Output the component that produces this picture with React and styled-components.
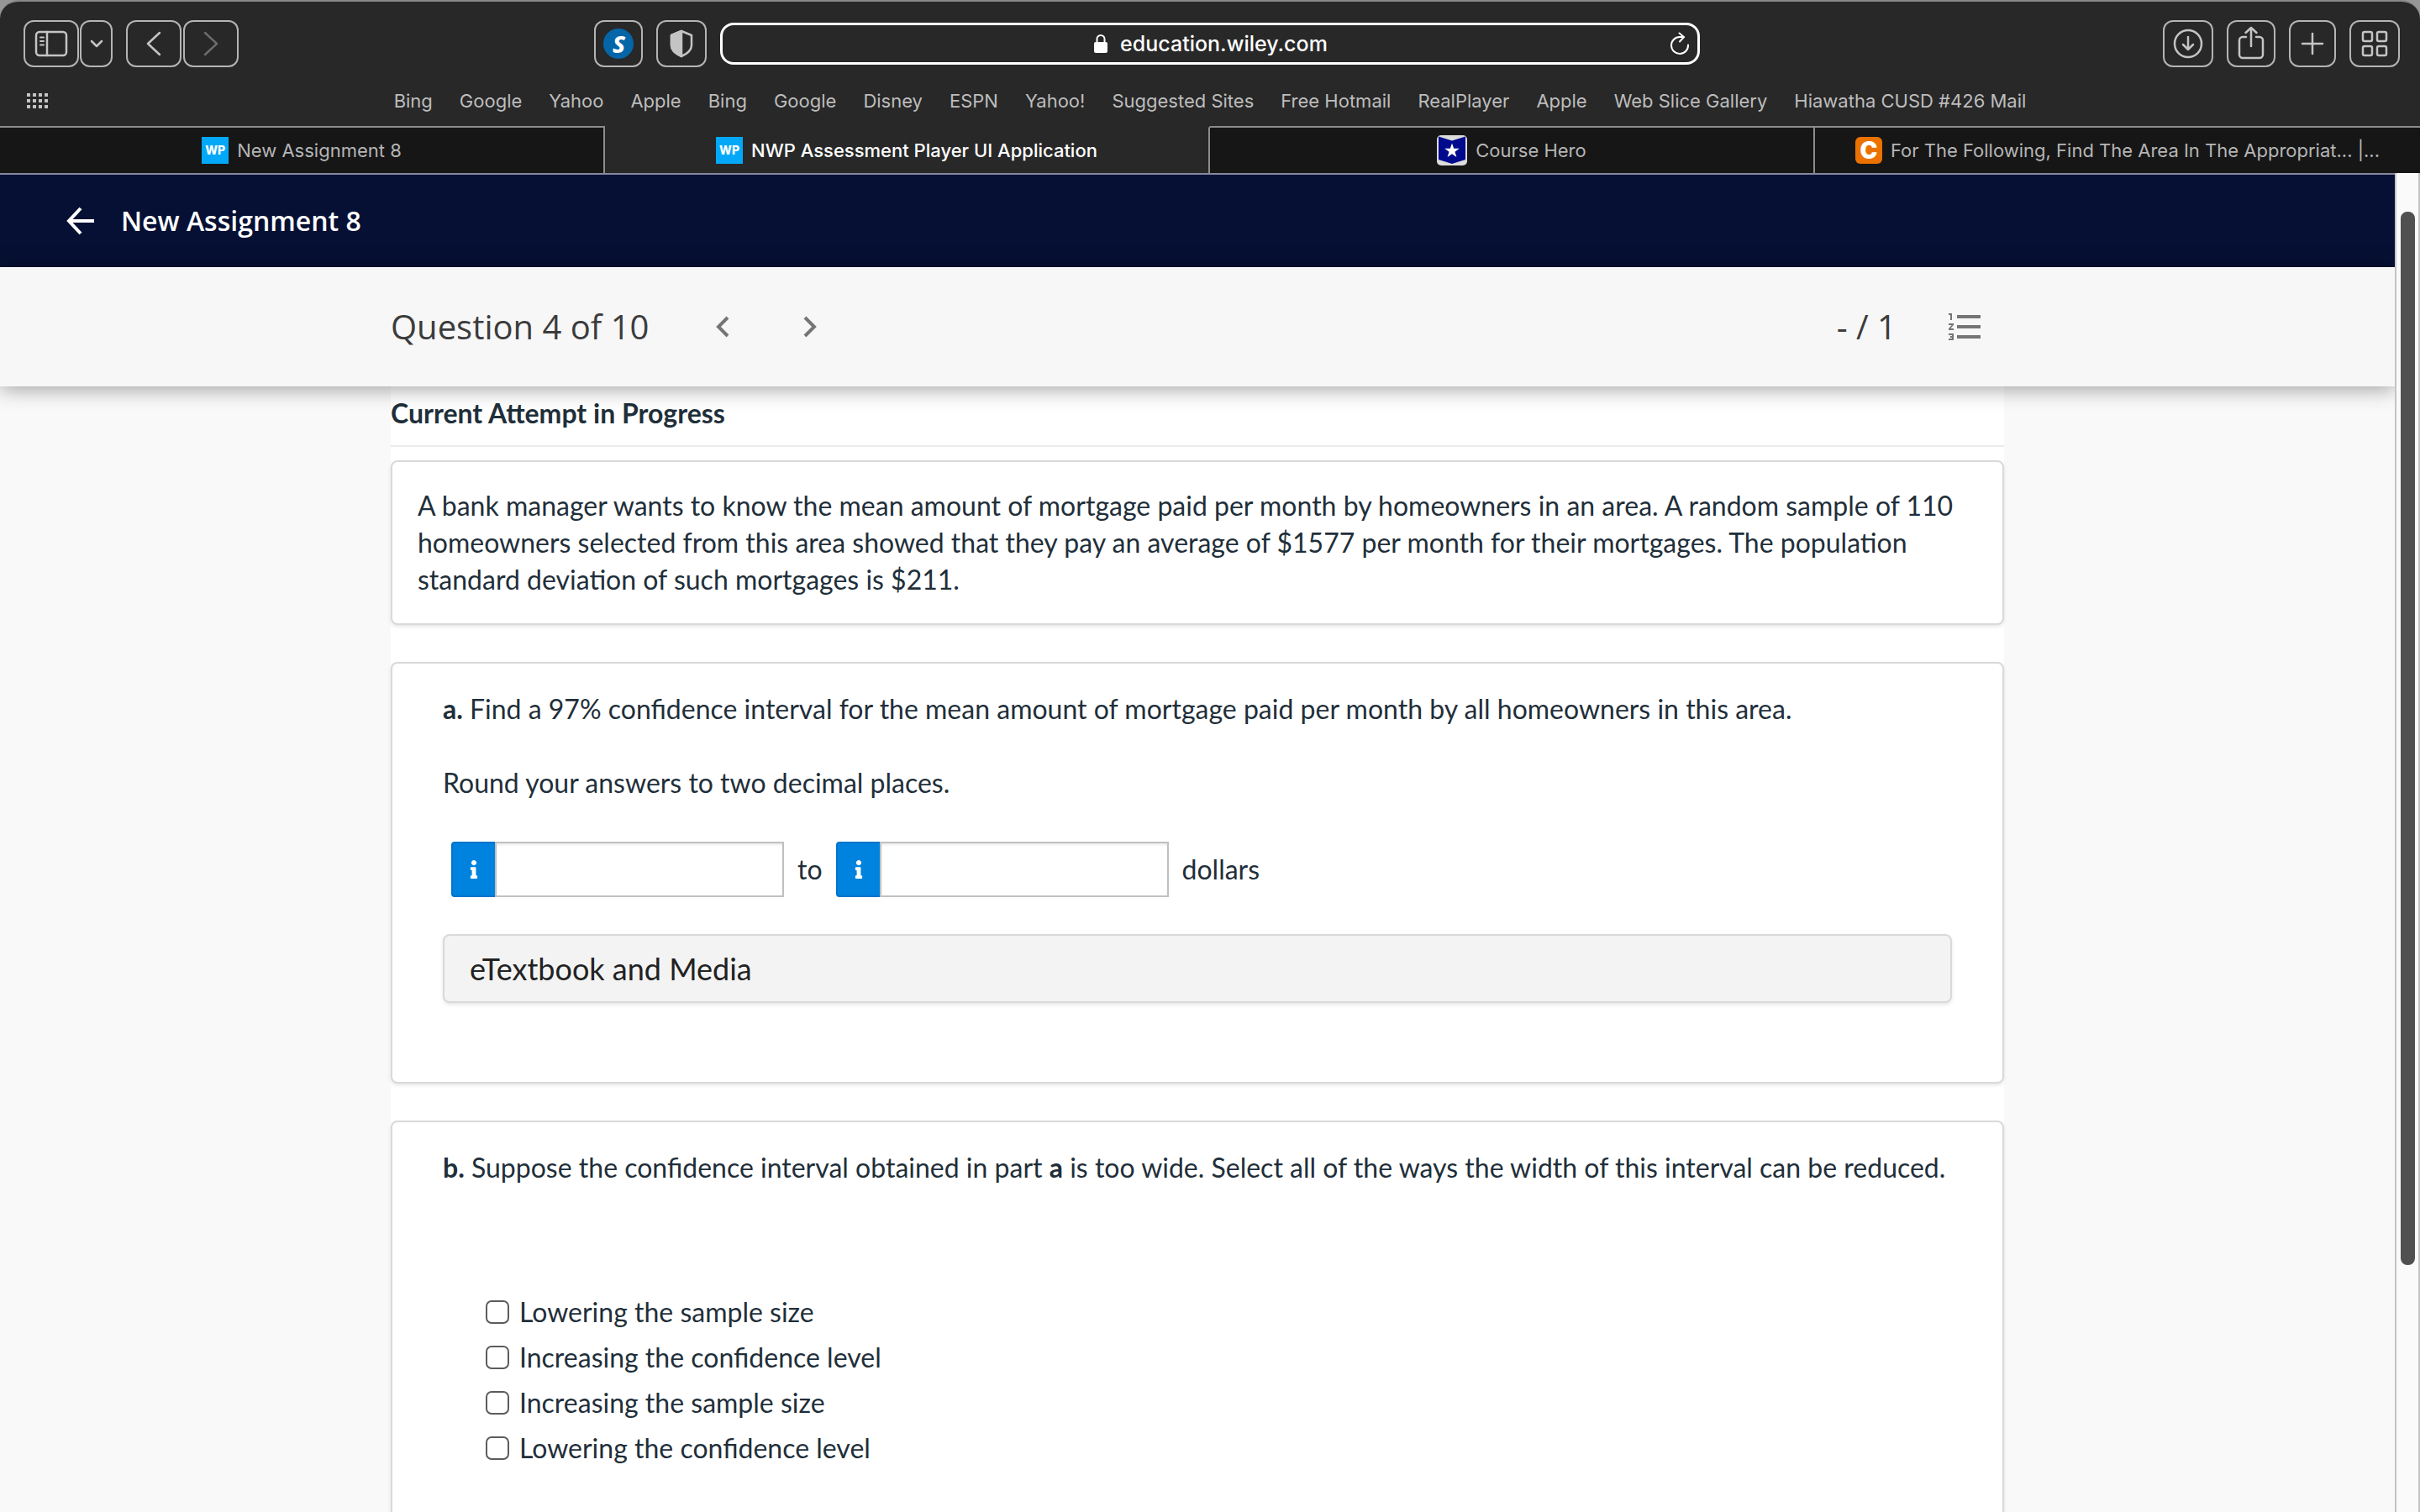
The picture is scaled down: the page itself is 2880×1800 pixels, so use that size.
import { useState } from 'react'
import styled, { createGlobalStyle } from 'styled-components'
import { MdFormatListNumbered } from 'react-icons/md'
import { FaInfo } from 'react-icons/fa'

const GlobalStyle = createGlobalStyle`
  * {
    box-sizing: border-box;
  }

  body {
    margin: 0;
    background: #969696;
    font-family: "Lato", sans-serif;
    font-size: 32px;
    line-height: 44px;
    color: #1f2f3a;
  }

  button, input {
    font: inherit;
    color: inherit;
  }

  button {
    padding: 0;
    background: none;
    border: 0;
    cursor: pointer;
  }

  p {
    margin: 0;
  }
`

const Window = styled.div`
  height: 100vh;
  display: flex;
  flex-direction: column;
  overflow: hidden;
  border-top: 2px solid #888888;
  border-radius: 22px 22px 0 0;
  background: #282828;
`

/* browser chrome */

const Chrome = styled.header`
  flex: none;
  font-family: "Inter", sans-serif;
  font-size: 22px;
  line-height: 28px;
  color: #bdbdbd;
`

const Toolbar = styled.div`
  height: 100px;
  display: flex;
  align-items: center;
  padding: 0 24px 0 28px;
`

const Spacer = styled.div`
  flex: ${props => props.$grow} 1 0;
`

const Group = styled.div`
  display: flex;
  gap: ${props => props.$gap};
`

const ToolButton = styled.button`
  width: ${props => props.$width || '60px'};
  height: 56px;
  display: flex;
  align-items: center;
  justify-content: center;
  border: 2px solid #b4b4b4;
  border-radius: 12px;
  color: ${props => (props.$dim ? '#6c6c6c' : '#c4c4c4')};

  svg {
    display: block;
    fill: none;
    stroke: currentColor;
    stroke-width: 2.5;
    stroke-linecap: round;
    stroke-linejoin: round;
  }
`

const ExtensionBadge = styled.span`
  width: 36px;
  height: 36px;
  display: flex;
  align-items: center;
  justify-content: center;
  border-radius: 50%;
  background: #0466a8;
  color: #fff;
  font-family: "Noto Sans", sans-serif;
  font-size: 28px;
  font-style: italic;
  font-weight: 800;
`

const Address = styled.form`
  width: 1166px;
  height: 50px;
  display: grid;
  grid-template-columns: 1fr auto 1fr;
  align-items: center;
  margin: 0 0 0 16px;
  padding: 0 8px;
  border: 3px solid #fff;
  border-radius: 16px;
  color: #fff;
`

const Location = styled.label`
  grid-column: 2;
  display: flex;
  align-items: center;
  gap: 14px;
`

const LocationInput = styled.input`
  field-sizing: content;
  padding: 0;
  border: 0;
  background: none;
  font-size: 25px;
  font-weight: 500;
  outline: 0;
`

const Reload = styled.button`
  justify-self: end;
  display: flex;
`

const Favorites = styled.nav`
  height: 48px;
  display: grid;
  grid-template-columns: 1fr auto 1fr;
  align-items: center;
  padding: 0 32px 12px;
`

const FavoriteLinks = styled.div`
  display: flex;
  gap: 32px;
`

const Favorite = styled.a`
  color: inherit;
  text-decoration: none;
  white-space: nowrap;
`

const Tabs = styled.div`
  height: 56px;
  display: grid;
  grid-template-columns: repeat(4, 1fr);
`

const Tab = styled.button`
  min-width: 0;
  display: flex;
  align-items: center;
  justify-content: center;
  gap: 10px;
  padding: 0 40px;
  border-top: 2px solid ${props => (props.$active ? '#282828' : '#8c8c8c')};
  border-right: 2px solid #8c8c8c;
  background: ${props => (props.$active ? '#282828' : '#161616')};
  color: ${props => (props.$active ? '#fff' : '#b5b5b5')};
  font-weight: ${props => (props.$active ? 500 : 400)};

  &:last-child {
    border-right: 0;
  }

  svg {
    flex: none;
  }
`

const TabTitle = styled.span`
  white-space: nowrap;
`

const WpBadge = styled.span`
  width: 32px;
  height: 32px;
  display: flex;
  align-items: center;
  justify-content: center;
  background: #03a9f8;
  color: #fff;
  font-size: 14px;
  font-weight: 800;
`

const CheggBadge = styled.span`
  width: 32px;
  height: 32px;
  display: flex;
  align-items: center;
  justify-content: center;
  border-radius: 6px;
  background: #eb7100;
  color: #fff;
  font-size: 28px;
  font-weight: 900;
`

/* page */

const Viewport = styled.div`
  flex: 1;
  min-height: 0;
  display: flex;
`

const Page = styled.div`
  flex: 1;
  overflow: hidden;
  background: #f9f9f9;
`

const Track = styled.div`
  width: 30px;
  padding: 46px 4px 0 5px;
  border-left: 2px solid #c4c4c4;
  border-right: 2px solid #c4c4c4;
  background: #fafafa;
`

const Thumb = styled.div`
  height: calc(100% - 294px);
  border-radius: 8px;
  background: #505050;
`

const TopBar = styled.div`
  height: 112px;
  display: flex;
  align-items: center;
  gap: 26px;
  padding: 0 74px;
  border-top: 2px solid #8588a0;
  background: #061034;
  color: #fff;
`

const BackButton = styled.button`
  display: flex;
`

const AssignmentTitle = styled.h1`
  margin: 0;
  font-family: "Open Sans", sans-serif;
  font-size: 32px;
  font-weight: 600;
`

const QuestionBar = styled.div`
  position: relative;
  height: 142px;
  background: #f7f7f7;
  box-shadow: 0 2px 24px rgba(0, 0, 0, 0.4);
  color: #3c3c3c;
`

const Column = styled.div`
  max-width: 1920px;
  margin: 0 auto;
`

const QuestionRow = styled(Column)`
  height: 100%;
  display: flex;
  align-items: center;
  font-family: "Open Sans", sans-serif;
  font-size: 40px;
`

const QuestionTitle = styled.h2`
  margin: 0 64px 0 0;
  font-size: 40px;
  font-weight: 400;
`

const StepButton = styled.button`
  width: 48px;
  height: 48px;
  display: flex;
  align-items: center;
  justify-content: center;
`

const Score = styled.span`
  margin: 0 58px 0 auto;
`

const ListButton = styled.button`
  display: flex;
  margin-right: 22px;
  color: #757575;
`

const Content = styled(Column)`
  min-height: 100%;
  background: #fff;
`

const Status = styled.h3`
  margin: 0 0 16px;
  padding: 10px 0 16px;
  border-bottom: 2px solid #ebebeb;
  font-size: 32px;
  font-weight: 700;
`

const Card = styled.section`
  margin-bottom: 44px;
  padding: ${props => props.$padding};
  border: 2px solid #d9d9d9;
  border-radius: 8px;
  background: #fff;
  box-shadow: 0 2px 4px rgba(0, 0, 0, 0.1);
`

const Paragraph = styled.p`
  margin-bottom: 44px;
`

const AnswerRow = styled.div`
  display: flex;
  align-items: center;
  gap: 16px;
  margin: 48px 0 44px;
  padding-left: 10px;
`

const AnswerField = styled.div`
  display: flex;
`

const HintButton = styled.button`
  width: 52px;
  height: 66px;
  display: flex;
  align-items: center;
  justify-content: center;
  border: 2px solid #0074ca;
  border-right: 0;
  border-radius: 4px 0 0 4px;
  background: #0082df;
  color: #fff;
`

const AnswerInput = styled.input`
  width: 344px;
  height: 66px;
  padding: 0 12px;
  border: 2px solid #c0c0c0;
  border-radius: 0;
  background: #fff;
  box-shadow: inset 0 2px 3px rgba(0, 0, 0, 0.08);
`

const MediaButton = styled.button`
  width: 100%;
  height: 82px;
  padding: 0 30px;
  border: 2px solid #d9d9d9;
  border-radius: 8px;
  background: #f3f3f3;
  box-shadow: 0 2px 4px rgba(0, 0, 0, 0.1);
  color: #222;
  font-size: 36px;
  text-align: left;
`

const Options = styled.div`
  display: grid;
  gap: 10px;
  padding: 84px 0 0 51px;
`

const Option = styled.label`
  display: flex;
  align-items: center;
  gap: 12px;
`

const Checkbox = styled.input`
  appearance: none;
  width: 28px;
  height: 28px;
  margin: 0;
  border: 2px solid #5c5c5c;
  border-radius: 7px;
  background: #fff;

  &:checked {
    background: #0082df;
  }
`

const SidebarIcon = () => (
  <svg width="40" height="32" viewBox="0 0 40 32">
    <rect x="2" y="2" width="36" height="28" rx="4" />
    <path d="M15 2v28" />
    <path d="M7 8.500h4M7 13h4M7 17.500h4" strokeWidth="2" />
  </svg>
)

const ChevronIcon = ({ flip }) => (
  <svg width="20" height="32" viewBox="0 0 20 32">
    <path d={flip ? 'M3 3l14 13L3 29' : 'M17 3L3 16l14 13'} />
  </svg>
)

// extra room below the box keeps the arrow above the centre line
const ShareIcon = () => (
  <svg width="34" height="44" viewBox="0 0 34 44">
    <path d="M11 14H7a4 4 0 0 0-4 4v17a4 4 0 0 0 4 4h20a4 4 0 0 0 4-4V18a4 4 0 0 0-4-4h-4M17 25V3M10.500 9L17 3l6.500 6" />
  </svg>
)

const GridIcon = () => (
  <svg width="34" height="34" viewBox="0 0 34 34">
    {[[3, 3], [20, 3], [3, 20], [20, 20]].map(([x, y]) => (
      <rect key={`${x}-${y}`} x={x} y={y} width="11" height="11" rx="2" />
    ))}
  </svg>
)

const DotsIcon = () => (
  <svg width="25" height="18" viewBox="0 0 25 18" fill="#c4c4c4">
    {[0, 7, 14].map(y => [0, 7, 14, 21].map(x => (
      <rect key={`${x}-${y}`} x={x} y={y} width="4" height="4" />
    )))}
  </svg>
)

const HeroIcon = () => (
  <svg width="36" height="36" viewBox="0 0 36 36">
    <rect width="36" height="36" rx="5" fill="#dcdcdc" />
    <path d="M2 1.500l16 5 16-5V29l-16 5-16-5z" fill="#000a8c" />
    <path d="M18 9.500l2.200 6.200h6.500l-5.200 4 1.900 6.300-5.400-3.800-5.400 3.800 1.900-6.300-5.200-4h6.500z" fill="#fff" />
  </svg>
)

const StepIcon = ({ flip }) => (
  <svg width="16" height="26" viewBox="0 0 16 26" fill="none" stroke="#757575" strokeWidth="4">
    <path d={flip ? 'M2 2l11 11L2 24' : 'M14 2L3 13l11 11'} />
  </svg>
)

const favorites = [
  'Bing', 'Google', 'Yahoo', 'Apple', 'Bing', 'Google', 'Disney', 'ESPN', 'Yahoo!',
  'Suggested Sites', 'Free Hotmail', 'RealPlayer', 'Apple', 'Web Slice Gallery',
  'Hiawatha CUSD #426 Mail',
]

const tabs = [
  { icon: <WpBadge>WP</WpBadge>, title: 'New Assignment 8' },
  { icon: <WpBadge>WP</WpBadge>, title: 'NWP Assessment Player UI Application', active: true },
  { icon: <HeroIcon />, title: 'Course Hero' },
  { icon: <CheggBadge>C</CheggBadge>, title: 'For The Following, Find The Area In The Appropriat... |...' },
]

const options = [
  'Lowering the sample size',
  'Increasing the confidence level',
  'Increasing the sample size',
  'Lowering the confidence level',
]

const BrowserChrome = () => (
  <Chrome>
    <Toolbar>
      <Group $gap="16px">
        <Group $gap="1px">
          <ToolButton $width="66px" aria-label="Sidebar"><SidebarIcon /></ToolButton>
          <ToolButton $width="39px" aria-label="Tab groups">
            <svg width="16" height="12" viewBox="0 0 16 12"><path d="M2 3l6 6 6-6" /></svg>
          </ToolButton>
        </Group>
        <Group $gap="2px">
          <ToolButton $width="66px" aria-label="Back"><ChevronIcon /></ToolButton>
          <ToolButton $width="66px" $dim aria-label="Forward"><ChevronIcon flip /></ToolButton>
        </Group>
      </Group>
      <Spacer $grow={10} />
      <Group $gap="16px">
        <ToolButton $width="58px" aria-label="Extension">
          <ExtensionBadge>S</ExtensionBadge>
        </ToolButton>
        <ToolButton aria-label="Privacy report">
          <svg width="30" height="34" viewBox="0 0 30 34">
            <path d="M15 2l12 5v12c0 6-5 10-12 13C8 29 3 25 3 19V7z" />
            <path d="M15 2v30C8 29 3 25 3 19V7z" fill="currentColor" />
          </svg>
        </ToolButton>
      </Group>
      <Address onSubmit={e => e.preventDefault()}>
        <Location>
          <svg width="18" height="24" viewBox="0 0 18 24">
            <rect x="1" y="10" width="16" height="13" rx="2" fill="#fff" />
            <path d="M4.500 11V6.500a4.500 4.500 0 0 1 9 0V11" fill="none" stroke="#fff" strokeWidth="2" />
          </svg>
          <LocationInput aria-label="Address" defaultValue="education.wiley.com" />
        </Location>
        <Reload type="button" aria-label="Reload">
          <svg width="26" height="28" viewBox="0 0 26 28" fill="none" stroke="#fff" strokeWidth="2" strokeLinecap="round">
            <path d="M23 15.500A10 10 0 1 1 13 6h5M12.500 1.500L18 6l-5 5.500" />
          </svg>
        </Reload>
      </Address>
      <Spacer $grow={13} />
      <Group $gap="16px">
        <ToolButton aria-label="Downloads">
          <svg width="36" height="36" viewBox="0 0 36 36">
            <circle cx="18" cy="18" r="16" />
            <path d="M18 10v15M12 19l6 6 6-6" />
          </svg>
        </ToolButton>
        <ToolButton $width="58px" aria-label="Share"><ShareIcon /></ToolButton>
        <ToolButton $width="56px" aria-label="New tab">
          <svg width="28" height="28" viewBox="0 0 28 28"><path d="M14 2v24M2 14h24" /></svg>
        </ToolButton>
        <ToolButton aria-label="Tab overview"><GridIcon /></ToolButton>
      </Group>
    </Toolbar>
    <Favorites>
      <DotsIcon />
      <FavoriteLinks>
        {favorites.map((name, i) => <Favorite key={i} href="#">{name}</Favorite>)}
      </FavoriteLinks>
    </Favorites>
    <Tabs>
      {tabs.map((tab, i) => (
        <Tab key={i} $active={tab.active}>
          {tab.icon}
          <TabTitle>{tab.title}</TabTitle>
        </Tab>
      ))}
    </Tabs>
  </Chrome>
)

const Answer = ({ label }) => (
  <AnswerField>
    <HintButton aria-label={`Hint for ${label}`}><FaInfo size={22} /></HintButton>
    <AnswerInput type="text" aria-label={label} />
  </AnswerField>
)

const App = () => {
  const [checked, setChecked] = useState([])

  const toggle = (option) => {
    setChecked(checked.includes(option) ? checked.filter(o => o !== option) : [...checked, option])
  }

  return (
    <Window>
      <GlobalStyle />
      <BrowserChrome />
      <Viewport>
        <Page>
          <TopBar>
            <BackButton aria-label="Back to assignments">
              <svg width="44" height="36" viewBox="0 0 44 36" fill="none" stroke="#fff" strokeWidth="4">
                <path d="M38 18H9M22 3L8 18l14 15" />
              </svg>
            </BackButton>
            <AssignmentTitle>New Assignment 8</AssignmentTitle>
          </TopBar>
          <QuestionBar>
            <QuestionRow>
              <QuestionTitle>Question 4 of 10</QuestionTitle>
              <Group $gap="56px">
                <StepButton aria-label="Previous question"><StepIcon /></StepButton>
                <StepButton aria-label="Next question"><StepIcon flip /></StepButton>
              </Group>
              <Score>- / 1</Score>
              <ListButton aria-label="Question list"><MdFormatListNumbered size={48} /></ListButton>
            </QuestionRow>
          </QuestionBar>
          <Content>
            <Status>Current Attempt in Progress</Status>
            <Card $padding="30px">
              <p>
                A bank manager wants to know the mean amount of mortgage paid per month by homeowners in an area. A random sample of 110 homeowners selected from this area showed that they pay an average of $1577 per month for their mortgages. The population standard deviation of such mortgages is $211.
              </p>
            </Card>
            <Card $padding="32px 60px 94px">
              <Paragraph><b>a.</b> Find a 97% confidence interval for the mean amount of mortgage paid per month by all homeowners in this area.</Paragraph>
              <Paragraph>Round your answers to two decimal places.</Paragraph>
              <AnswerRow>
                <Answer label="Lower limit" />
                <span>to</span>
                <Answer label="Upper limit" />
                <span>dollars</span>
              </AnswerRow>
              <MediaButton>eTextbook and Media</MediaButton>
            </Card>
            <Card $padding="32px 60px 94px">
              <Paragraph><b>b.</b> Suppose the confidence interval obtained in part <b>a</b> is too wide. Select all of the ways the width of this interval can be reduced.</Paragraph>
              <Options>
                {options.map(option => (
                  <Option key={option}>
                    <Checkbox type="checkbox" checked={checked.includes(option)} onChange={() => toggle(option)} />
                    {option}
                  </Option>
                ))}
              </Options>
            </Card>
          </Content>
        </Page>
        <Track>
          <Thumb />
        </Track>
      </Viewport>
    </Window>
  )
}

export default App
